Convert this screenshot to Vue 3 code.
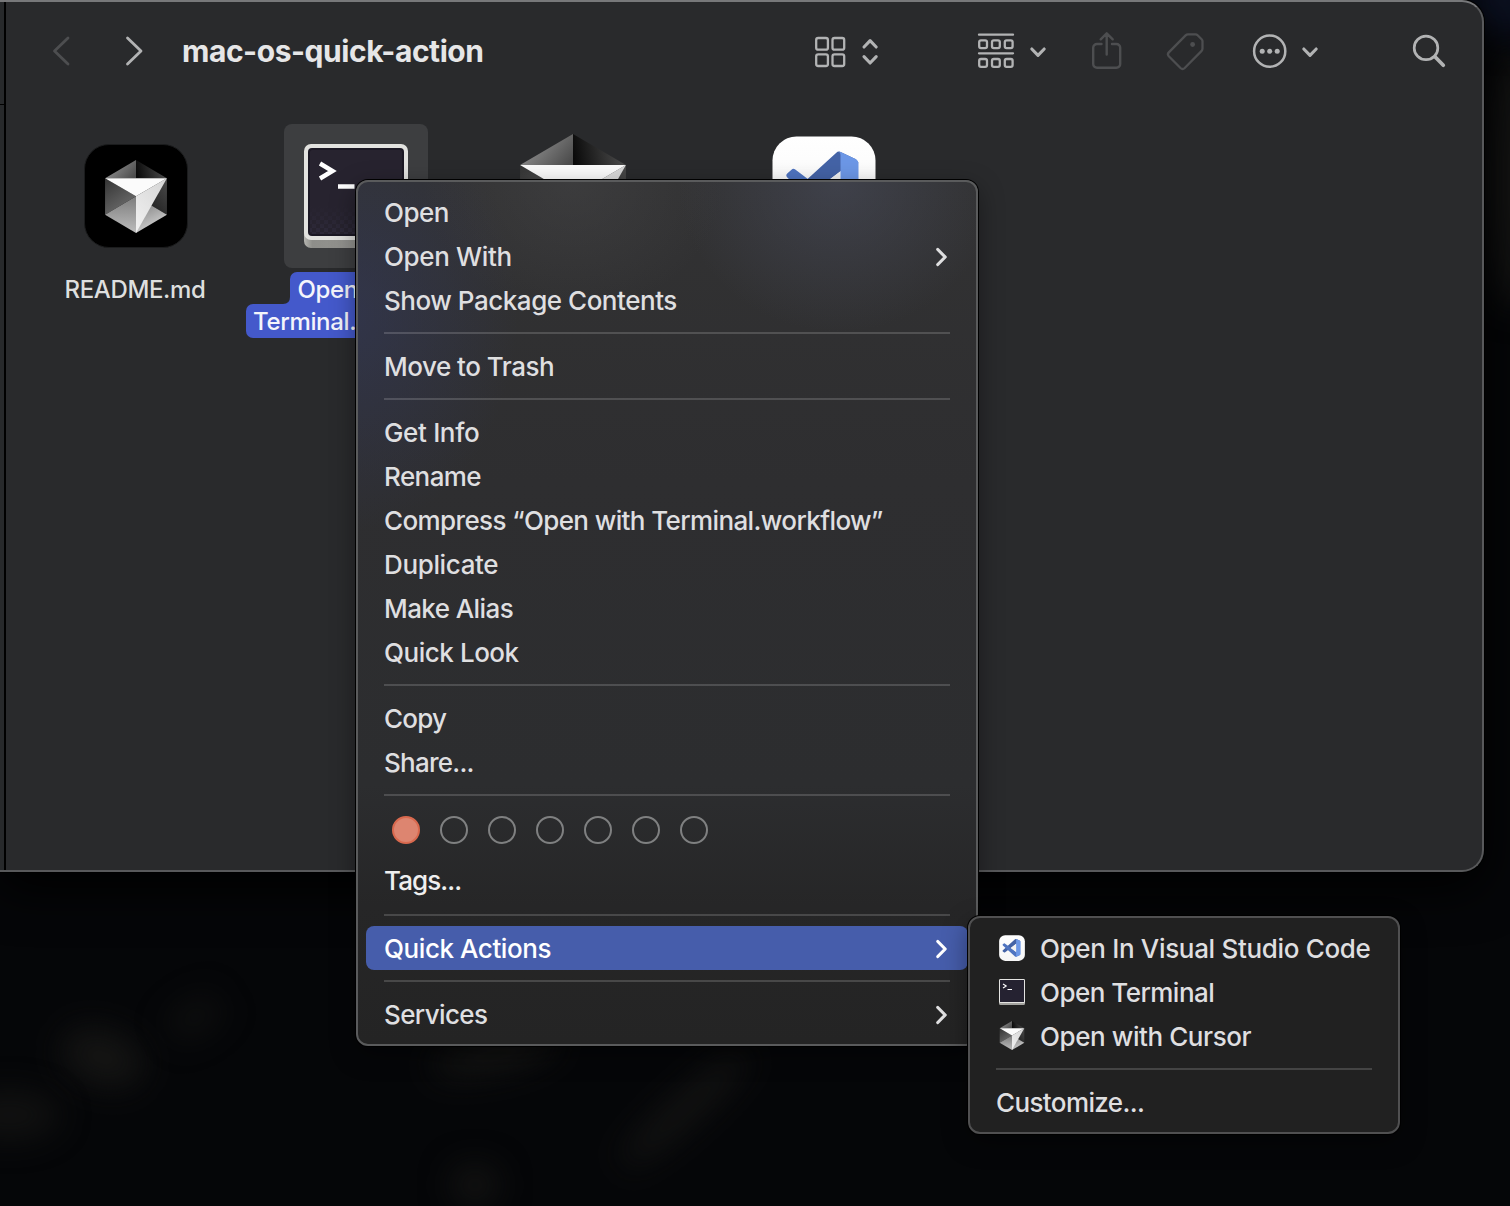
<script setup>
const groups = [
  [
    { label: 'Open', ls: -0.55 },
    { label: 'Open With', arrow: true, ls: -0.35 },
    { label: 'Show Package Contents', ls: -0.47 }
  ],
  [{ label: 'Move to Trash', ls: -0.5 }],
  [
    { label: 'Get Info', ls: -0.34 },
    { label: 'Rename', ls: -0.58 },
    { label: 'Compress “Open with Terminal.workflow”', ls: -0.61 },
    { label: 'Duplicate', ls: -0.36 },
    { label: 'Make Alias', ls: -0.58 },
    { label: 'Quick Look', ls: -0.46 }
  ],
  [{ label: 'Copy', ls: -0.75 }, { label: 'Share...', ls: -0.75 }],
  [{ tags: true }, { label: 'Tags...', bright: true, ls: -0.9 }],
  [{ label: 'Quick Actions', arrow: true, active: true, ls: -0.43 }],
  [{ label: 'Services', arrow: true, ls: -0.62 }]
]
const actions = [
  { label: 'Open In Visual Studio Code', icon: 'code', ls: -0.33 },
  { label: 'Open Terminal', icon: 'term', ls: -0.52 },
  { label: 'Open with Cursor', icon: 'cube', ls: -0.42 }
]
const tracking = (it) => ({ letterSpacing: it.ls + 'px' })
</script>

<template>
  <div class="desktop">
    <svg class="defs" width="0" height="0" aria-hidden="true">
      <defs>
        <linearGradient id="gTL" x1="0" y1="0.3" x2="1" y2="0.8"><stop offset="0" stop-color="#999" /><stop offset="1" stop-color="#4c4c4c" /></linearGradient>
        <linearGradient id="gTR" x1="0" y1="0.6" x2="1" y2="0.5"><stop offset="0" stop-color="#0a0a0a" /><stop offset="1" stop-color="#505050" /></linearGradient>
        <linearGradient id="gL" x1="0" y1="0" x2="0.6" y2="1"><stop offset="0" stop-color="#333" /><stop offset="1" stop-color="#6e6e6e" /></linearGradient>
        <linearGradient id="gBL" x1="0.5" y1="0" x2="0.5" y2="1"><stop offset="0" stop-color="#7c7c7c" /><stop offset="1" stop-color="#bdbdbd" /></linearGradient>
        <linearGradient id="gR" x1="0" y1="1" x2="1" y2="0"><stop offset="0" stop-color="#111" /><stop offset="1" stop-color="#4a4a4a" /></linearGradient>
        <linearGradient id="gBR" x1="0.3" y1="0" x2="0.7" y2="1"><stop offset="0" stop-color="#777" /><stop offset="1" stop-color="#ddd" /></linearGradient>
        <linearGradient id="gF" x1="0.8" y1="0" x2="0.2" y2="1"><stop offset="0" stop-color="#d6d6d6" /><stop offset="1" stop-color="#f0f0f0" /></linearGradient>
        <linearGradient id="gTile" x1="0" y1="0" x2="0" y2="1"><stop offset="0" stop-color="#fff" /><stop offset="1" stop-color="#f6f6f6" /></linearGradient>
        <linearGradient id="gLip" x1="0" y1="0" x2="1" y2="0"><stop offset="0" stop-color="#b5b5b0" /><stop offset="0.08" stop-color="#8e8e8a" /><stop offset="0.9" stop-color="#9a9a96" /><stop offset="1" stop-color="#b5b5b0" /></linearGradient>
        <pattern id="dots" width="8" height="8" patternUnits="userSpaceOnUse"><rect width="4" height="4" fill="#302c3e" /><rect x="4" y="4" width="4" height="4" fill="#302c3e" /></pattern>
        <linearGradient id="gFade" x1="0" y1="0" x2="0" y2="1"><stop offset="0" stop-color="#27232f" /><stop offset="1" stop-color="#27232f" stop-opacity="0.3" /></linearGradient>
      </defs>
      <symbol id="cube" viewBox="0 0 100 118">
        <path d="M50 0 0 29.3H50Z" fill="url(#gTL)" />
        <path d="M50 0 100 29.3H50Z" fill="url(#gTR)" />
        <path d="M0 29.3 50 58.7 0 88.6Z" fill="url(#gL)" />
        <path d="M0 88.6 50 58.7V118Z" fill="url(#gBL)" />
        <path d="M100 29.3V88.6L50 58.7Z" fill="url(#gR)" />
        <path d="M50 58.7 100 88.6 50 118Z" fill="url(#gBR)" />
        <path d="M100 29.3 50 58.7V118Z" fill="url(#gF)" />
        <path d="M0 29.3H100L50 58.7Z" fill="#fbfbfb" />
      </symbol>
      <symbol id="code" viewBox="0 0 104 104">
        <rect x="0.5" y="0.5" width="103" height="103" rx="24" fill="url(#gTile)" />
        <g transform="translate(14.5 15.5) scale(0.72)">
          <path d="M96.5 10.8 75.9.9a6.2 6.2 0 0 0-7.1 1.2L1.4 63.6a4.2 4.2 0 0 0 0 6.2l5.5 5a4.2 4.2 0 0 0 5.3.2L93.4 13.4C96.1 11.3 100 13.3 100 16.7" fill="#4463a6" />
          <path d="M96.5 89.2 75.9 99.1a6.2 6.2 0 0 1-7.1-1.2L1.4 36.4a4.2 4.2 0 0 1 0-6.2l5.5-5a4.2 4.2 0 0 1 5.3-.2L93.4 86.6C96.1 88.7 100 86.7 100 83.3" fill="#4f74c0" />
          <path d="M75 27.3V72.7L45.1 50Z" fill="#f2f2f2" />
          <path d="M75.9 99.1a6.2 6.2 0 0 1-3.5.4Q75 99 75 95V5Q75 1 72.4.5a6.2 6.2 0 0 1 3.5.4L96.5 10.8A6.25 6.25 0 0 1 100 16.4V83.6a6.25 6.25 0 0 1-3.5 5.6Z" fill="#6c97e6" />
        </g>
      </symbol>
    </svg>

    <div class="wallpaper">
      <i class="w1"></i><i class="w2"></i><i class="w3"></i><i class="w4"></i><i class="w5"></i><i class="w6"></i><i class="w7"></i><i class="w8"></i>
    </div>

    <section class="window">
      <div class="sliver"></div>
      <div class="main">
        <header class="toolbar">
          <svg class="back" width="20" height="40" viewBox="51 31 20 40"><path d="M68 38 54.5 51 68 64" stroke="#4d4e50" stroke-width="2.8" /></svg>
          <svg class="fwd" width="20" height="40" viewBox="124 31 20 40"><path d="M127.5 38 141 51 127.5 64" stroke="#b2b3b4" stroke-width="2.8" /></svg>
          <h1>mac-os-quick-action</h1>
          <svg class="grid" width="66" height="40" viewBox="814 31 66 40" stroke="#b2b3b4" stroke-width="2.3">
            <rect x="816.2" y="38" width="11.7" height="11.7" rx="2" /><rect x="832.5" y="38" width="11.7" height="11.7" rx="2" />
            <rect x="816.2" y="54.3" width="11.7" height="11.7" rx="2" /><rect x="832.5" y="54.3" width="11.7" height="11.7" rx="2" />
            <path d="M864 47 870.1 40.7 876.2 47M864 56.7 870.1 63 876.2 56.7" stroke-width="3.1" />
          </svg>
          <svg class="group" width="72" height="40" viewBox="976 31 72 40" stroke="#b2b3b4" stroke-width="2.3">
            <path d="M979 34.7H1013M979 53.3H1013" />
            <rect v-for="x in [979.2, 992, 1004.8]" :key="x" :x="x" y="40.3" width="7.8" height="7.8" rx="1.8" />
            <rect v-for="x in [979.2, 992, 1004.8]" :key="-x" :x="x" y="59" width="7.8" height="7.8" rx="1.8" />
            <path d="M1031.8 49 1038 55.3 1044.2 49" stroke-width="3.1" />
          </svg>
          <svg class="share" width="34" height="40" viewBox="1090 31 34 40" stroke="#4d4e50" stroke-width="2.4">
            <path d="M1101.5 44H1097A3.8 3.8 0 0 0 1093.2 47.8V64A3.8 3.8 0 0 0 1097 67.8H1116.4A3.8 3.8 0 0 0 1120.2 64V47.8A3.8 3.8 0 0 0 1116.4 44H1112M1106.7 54.5V33.5M1100.7 39.3 1106.7 33.3 1112.7 39.3" />
          </svg>
          <svg class="tag" width="42" height="42" viewBox="1164 30 42 42" stroke="#4d4e50" stroke-width="2.3">
            <path d="M1188 34.3H1195.5Q1196.7 34.3 1197.6 35.2L1201.6 39.2Q1202.5 40.1 1202.5 41.3V48.5Q1202.5 50 1201.4 51.1L1184.7 68Q1182.6 70 1180.5 68L1168.8 56.3Q1167 54.3 1168.8 52.4L1185.6 35.4Q1186.7 34.3 1188 34.3Z" />
            <circle cx="1192.6" cy="44.5" r="2.4" fill="#4d4e50" stroke="none" />
          </svg>
          <svg class="more" width="70" height="40" viewBox="1251 31 70 40" stroke="#b2b3b4" stroke-width="2.5">
            <circle cx="1269.7" cy="51.2" r="15.6" />
            <g fill="#b2b3b4" stroke="none"><circle cx="1262.2" cy="51.2" r="2.5" /><circle cx="1269.7" cy="51.2" r="2.5" /><circle cx="1277.2" cy="51.2" r="2.5" /></g>
            <path d="M1303.8 49 1310 55.3 1316.2 49" stroke-width="3.1" />
          </svg>
          <svg class="search" width="36" height="40" viewBox="1411 31 36 40" stroke="#b2b3b4">
            <circle cx="1426" cy="47.9" r="11.8" stroke-width="2.7" /><path d="M1435 56.7 1443.3 65.2" stroke-width="3.7" />
          </svg>
        </header>

        <div class="files">
          <figure class="file">
            <div class="thumb"><div class="blacktile"><svg width="62" height="73"><use href="#cube" width="62" height="73" /></svg></div></div>
            <figcaption><span class="name">README.md</span></figcaption>
          </figure>
          <figure class="file sel">
            <div class="thumb">
              <svg width="104" height="104" viewBox="0 0 104 104">
                <rect y="14" width="104" height="90" rx="7" fill="url(#gLip)" />
                <rect width="104" height="96" rx="7" fill="#e2e2df" />
                <rect x="4" y="4" width="96" height="88" rx="4" fill="#1b1824" />
                <rect x="6" y="6" width="92" height="84" rx="2" fill="#27232f" />
                <rect x="6" y="62" width="92" height="28" fill="url(#dots)" /><rect x="6" y="62" width="92" height="28" fill="url(#gFade)" />
                <path d="M16 19.5 28.5 27 16 34.5" fill="none" stroke="#fff" stroke-width="4.4" stroke-linecap="butt" />
                <path d="M34 42.5H50.5" stroke="#fff" stroke-width="4.4" />
              </svg>
            </div>
            <figcaption>
              <span class="l1">Open</span>
              <span class="l2">Terminal.</span>
              <svg class="notch" width="7" height="7" viewBox="0 0 7 7"><path d="M7 0V7H0Q7 7 7 0Z" fill="#4459cb" /></svg>
            </figcaption>
          </figure>
          <figure class="file third"><div class="thumb"><svg width="106" height="125"><use href="#cube" width="106" height="125" /></svg></div></figure>
          <figure class="file fourth"><div class="thumb"><svg width="104" height="104"><use href="#code" width="104" height="104" /></svg></div></figure>
        </div>
      </div>
    </section>

    <nav class="menu context">
      <template v-for="(g, gi) in groups" :key="gi">
        <hr v-if="gi" />
        <template v-for="(it, i) in g" :key="i">
          <div v-if="it.tags" class="tags"><b v-for="n in 7" :key="n" :class="{ red: n === 1 }"></b></div>
          <div v-else class="item" :class="{ active: it.active, bright: it.bright }">
            <span :style="tracking(it)">{{ it.label }}</span>
            <svg v-if="it.arrow" class="arrow" width="14" height="22" viewBox="0 0 14 22"><path d="M2.8 3.5 10.2 11 2.8 18.5" stroke="currentColor" stroke-width="3.2" /></svg>
          </div>
        </template>
      </template>
    </nav>

    <nav class="menu sub">
      <div v-for="a in actions" :key="a.label" class="item">
        <svg v-if="a.icon === 'code'" class="ic" width="26" height="26"><use href="#code" width="26" height="26" /></svg>
        <svg v-else-if="a.icon === 'term'" class="ic" width="26" height="26" viewBox="0 0 26 26">
          <rect width="26" height="26" rx="1.5" fill="#a4a4a0" /><rect width="26" height="24" rx="1.5" fill="#e4e4e2" /><rect x="1" y="1" width="24" height="22" fill="#252231" />
          <path d="M4 5 7.3 7 4 9M8.5 10.5H13" fill="none" stroke="#fff" stroke-width="1.1" stroke-linecap="butt" />
        </svg>
        <svg v-else class="ic cursor" width="26" height="29"><use href="#cube" width="26" height="29" /></svg>
        <span :style="tracking(a)">{{ a.label }}</span>
      </div>
      <hr />
      <div class="item customize"><span>Customize...</span></div>
    </nav>
  </div>
</template>

<style>
body { background: #050608; }
</style>

<style scoped>
.desktop { position: relative; width: 1510px; height: 1206px; overflow: hidden; background: #050608; font-family: Inter, "Liberation Sans", sans-serif; }
.desktop * { box-sizing: border-box; }
.defs { position: absolute; }
svg { display: block; flex: none; }
.wallpaper { position: absolute; inset: 0; }
.wallpaper i { position: absolute; border-radius: 50%; filter: blur(16px); background: #141413; }
.w1 { left: 60px; top: 1030px; width: 85px; height: 55px; transform: rotate(20deg); }
.w2 { left: -40px; top: 1090px; width: 100px; height: 50px; opacity: .8; }
.w3 { left: 165px; top: 1000px; width: 60px; height: 35px; transform: rotate(-30deg); opacity: .6; }
.w4 { left: 430px; top: 1038px; width: 130px; height: 34px; transform: rotate(-12deg); }
.w5 { left: 600px; top: 1095px; width: 170px; height: 28px; transform: rotate(-42deg); }
.w6 { left: 452px; top: 1165px; width: 46px; height: 40px; }
.w7 { left: 1485px; top: 50px; width: 60px; height: 260px; }
.wallpaper .w8 { left: 1470px; top: -40px; width: 70px; height: 80px; background: #0b1020; }
.window { position: relative; display: flex; width: 1484px; height: 872px; border: 2px solid #58595b; border-top-color: #77787a; border-left: 0; border-radius: 0 22px 22px 0; background: #292a2c; box-shadow: 0 0 0 1px #000, 0 16px 50px #000; overflow: hidden; }
.sliver { width: 6px; border-right: 2px solid #000; background: linear-gradient(#000, #000) 0 102px / 100% 1px no-repeat, #27292b; }
.main { flex: 1; display: flex; flex-direction: column; }
.toolbar { display: flex; align-items: center; height: 98px; padding-left: 45px; }
.toolbar svg { fill: none; stroke-linecap: round; stroke-linejoin: round; }
.fwd { margin-left: 53px; }
h1 { margin: 0 0 0 38px; width: 632px; font-size: 30px; line-height: 40px; font-weight: 700; letter-spacing: -.45px; color: #e6e6e7; white-space: nowrap; }
.group { margin-left: 96px; }
.share { margin-left: 42px; }
.tag { margin-left: 40px; }
.more { margin-left: 45px; }
.search { margin-left: 90px; }
.files { display: flex; padding: 24px 0 0 58px; }
.file { margin: 0; width: 144px; display: flex; flex-direction: column; align-items: center; }
.sel { margin-left: 76px; }
.third { margin-left: 73px; }
.fourth { margin-left: 107px; }
.thumb { width: 144px; height: 144px; border-radius: 8px; display: flex; align-items: center; justify-content: center; flex: none; }
.third .thumb { width: 143px; height: 145px; }
.fourth .thumb { height: 128px; }
.sel .thumb { background: #3d3e40; }
.blacktile { width: 104px; height: 104px; border-radius: 25px; background: #000; border: 1px solid #1b1c1d; display: flex; align-items: center; justify-content: center; }
figcaption { position: relative; display: flex; flex-direction: column; align-items: center; margin-top: 4px; font-size: 24px; font-weight: 450; line-height: 36px; letter-spacing: -.35px; color: #dedfdf; white-space: nowrap; }
.name { margin-right: 2px; }
.sel figcaption { color: #f4f5fb; }
.l1 { width: 132px; height: 32px; padding-left: 7.5px; background: #4459cb; border-radius: 7px 7px 0 0; }
.l2 { width: 220px; height: 34px; padding-left: 7px; background: #4459cb; border-radius: 7px; }
.notch { position: absolute; left: 37px; top: 25px; }
.menu { position: absolute; border: 2px solid #5a5b5c; border-radius: 12px; padding: 8px; box-shadow: 0 0 0 1px #000, 0 8px 26px rgba(0, 0, 0, .4); font-size: 26px; font-weight: 450; color: #dfdfe0; }
.context { left: 356px; top: 180px; width: 622px; height: 866px;
  background:
    radial-gradient(ellipse 170px 220px at -10px 130px, rgba(50, 56, 90, .6), rgba(50, 56, 90, 0)),
    radial-gradient(ellipse 160px 150px at 480px 0, rgba(76, 80, 98, .5), rgba(76, 80, 98, 0)),
    radial-gradient(ellipse 150px 130px at 215px 0, rgba(72, 72, 74, .45), rgba(72, 72, 74, 0)),
    linear-gradient(#323233, #2e2e30 35%, #2c2d2f 70%, #262627 84%, #242424); }
.sub { left: 968px; top: 916px; width: 432px; height: 218px; background: #212121; border-color: #505051; }
.item { display: flex; align-items: center; height: 44px; padding: 0 18px; line-height: 44px; white-space: nowrap; border-radius: 8px; }
.item span { padding-top: 2px; }
.customize { letter-spacing: -.62px; }
.context .item { justify-content: space-between; }
.item svg { fill: none; stroke-linecap: round; stroke-linejoin: round; }
.item .arrow { margin: 2px 1px 0 0; }
.bright { color: #efefef; }
.active { background: #465dab; color: #fff; }
hr { height: 2px; border: 0; margin: 10px 18px; background: rgba(255, 255, 255, .16); }
.tags { display: flex; gap: 20px; height: 52px; padding: 10px 26px; }
.tags b { width: 28px; height: 28px; border: 2px solid #7f8081; border-radius: 50%; }
.tags .red { background: #dd8570; border-color: #d9694e; }
.tags + .item { height: 46px; }
.tags + .item span { padding-top: 0; }
.sub .ic { margin: 0 15px 0 3px; }
.sub .cursor { margin-bottom: 1px; }
</style>
